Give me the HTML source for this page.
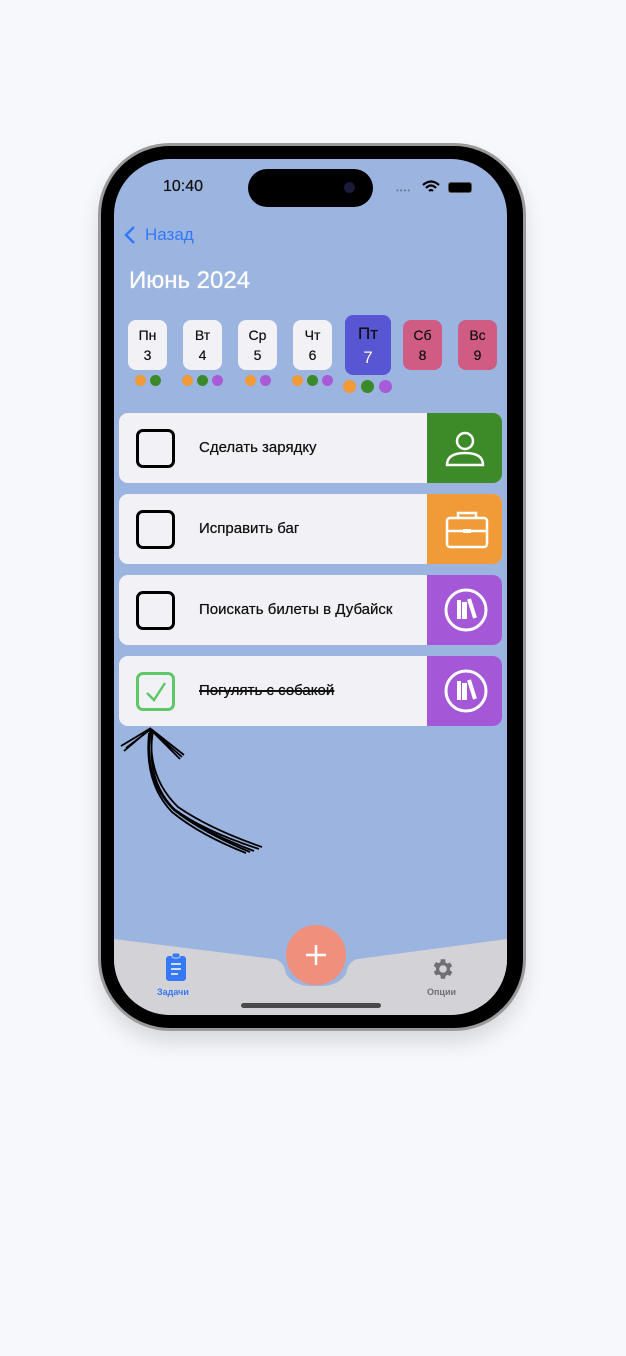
<!DOCTYPE html>
<html><head><meta charset="utf-8"><style>
*{margin:0;padding:0;box-sizing:border-box}
body{width:626px;height:1356px;background:#f7f8fc;position:relative;overflow:hidden;font-family:"Liberation Sans",sans-serif}
.a{position:absolute}
.frame{left:98px;top:143px;width:428px;height:888px;border-radius:72px;background:#000;border:3px solid #9a9a9c;box-shadow:0 12px 20px rgba(0,0,0,.12)}
.screen{left:114px;top:159px;width:393px;height:856px;border-radius:56px;background:#9bb4e0;overflow:hidden}
.day{width:39px;height:50px;border-radius:8px;background:#f2f2f6;text-align:center;font-size:14px;line-height:20px;padding-top:5px;color:#111;text-shadow:0 0 .4px #111}
.dot{width:11px;height:11px;border-radius:50%}
.row{left:5px;width:383px;height:70px;border-radius:9px;background:#f2f2f6;overflow:hidden}
.cb{left:17px;top:16px;width:39px;height:39px;border:3.5px solid #000;border-radius:7px}
.lbl{left:80px;top:26px;font-size:15px;color:#111;text-shadow:0 0 .5px #111}
.ic{right:0;top:0;width:75px;height:70px}
</style></head><body>
<div class="a frame"></div>
<div class="a screen">
 <div class="a" style="left:49px;top:19px;width:50px;font-size:16px;color:#111;text-shadow:0 0 .5px #111">10:40</div>
 <div class="a" style="left:134px;top:10px;width:125px;height:38px;border-radius:19px;background:#000"><div class="a" style="left:96px;top:13px;width:11px;height:11px;border-radius:50%;background:#1a1a3a"></div></div>
 <div class="a" style="left:282px;top:27px;font-size:8px;color:#6b7a98;letter-spacing:1px">••••</div>
 <svg class="a" style="left:308px;top:21px" width="18" height="14" viewBox="0 0 18 14"><path d="M1 5Q9-2 17 5M4 8Q9 3 14 8M7 11Q9 9 11 11" stroke="#000" stroke-width="2.2" fill="none"/></svg>
 <div class="a" style="left:334px;top:23px;width:24px;height:11px;border-radius:3px;background:#000;border:1px solid #555"></div>
 <svg class="a" style="left:9px;top:66px" width="14" height="20"><path d="M11 2L3 10L11 18" stroke="#3478f6" stroke-width="2.5" fill="none"/></svg>
 <div class="a" style="left:31px;top:66px;font-size:17px;color:#3478f6">Назад</div>
 <div class="a" style="left:15px;top:108px;font-size:24px;color:#fff;text-shadow:0 0 .8px #fff">Июнь 2024</div>

 <div class="a day" style="left:14px;top:161px">Пн<br>3</div>
 <div class="a day" style="left:69px;top:161px">Вт<br>4</div>
 <div class="a day" style="left:124px;top:161px">Ср<br>5</div>
 <div class="a day" style="left:179px;top:161px">Чт<br>6</div>
 <div class="a day" style="left:231px;top:156px;width:46px;height:60px;background:#5856d2;font-size:17px;line-height:24px;padding-top:7px"><span style="color:#111">Пт</span><br><span style="color:#fff">7</span></div>
 <div class="a day" style="left:289px;top:161px;background:#d05c84">Сб<br>8</div>
 <div class="a day" style="left:344px;top:161px;background:#d05c84">Вс<br>9</div>
 <div class="a dot" style="left:21px;top:216px;background:#f09a38"></div><div class="a dot" style="left:36px;top:216px;background:#3a8a2a"></div>
 <div class="a dot" style="left:68px;top:216px;background:#f09a38"></div><div class="a dot" style="left:83px;top:216px;background:#3a8a2a"></div><div class="a dot" style="left:98px;top:216px;background:#a95ad8"></div>
 <div class="a dot" style="left:131px;top:216px;background:#f09a38"></div><div class="a dot" style="left:146px;top:216px;background:#a95ad8"></div>
 <div class="a dot" style="left:178px;top:216px;background:#f09a38"></div><div class="a dot" style="left:193px;top:216px;background:#3a8a2a"></div><div class="a dot" style="left:208px;top:216px;background:#a95ad8"></div>
 <div class="a dot" style="left:229px;top:221px;width:13px;height:13px;background:#f09a38"></div><div class="a dot" style="left:247px;top:221px;width:13px;height:13px;background:#3a8a2a"></div><div class="a dot" style="left:265px;top:221px;width:13px;height:13px;background:#a95ad8"></div>

 <div class="a row" style="top:254px"><div class="a cb"></div><div class="a lbl">Сделать зарядку</div><div class="a ic" style="background:#3d8a28"><svg width="75" height="70"><circle cx="38" cy="28" r="8" stroke="#fff" stroke-width="2.5" fill="none"/><path d="M20 52Q20 40 38 40Q56 40 56 52Z" stroke="#fff" stroke-width="2.5" fill="none"/></svg></div></div>
 <div class="a row" style="top:335px"><div class="a cb"></div><div class="a lbl">Исправить баг</div><div class="a ic" style="background:#f09a38"><svg width="75" height="70"><rect x="20" y="24" width="40" height="29" rx="3" stroke="#fff" stroke-width="2.5" fill="none"/><path d="M31 24V19H49V24M20 37H60" stroke="#fff" stroke-width="2.5" fill="none"/><rect x="36" y="35" width="8" height="4" fill="#fff"/></svg></div></div>
 <div class="a row" style="top:416px"><div class="a cb"></div><div class="a lbl">Поискать билеты в Дубайск</div><div class="a ic" style="background:#a457d6"><svg width="75" height="70"><circle cx="39" cy="35" r="20" stroke="#fff" stroke-width="3" fill="none"/><rect x="30" y="25" width="4" height="19" fill="#fff"/><rect x="35" y="27" width="5" height="17" fill="#fff"/><path d="M42 24L48 43" stroke="#fff" stroke-width="4"/></svg></div></div>
 <div class="a row" style="top:497px"><div class="a cb" style="border-color:#5ec76a"><svg class="a" style="left:5px;top:5px" width="24" height="24"><path d="M3 13L10 20L21 3" stroke="#5ec76a" stroke-width="2.5" fill="none"/></svg></div><div class="a lbl" style="text-decoration:line-through;text-decoration-thickness:2px">Погулять с собакой</div><div class="a ic" style="background:#a457d6"><svg width="75" height="70"><circle cx="39" cy="35" r="20" stroke="#fff" stroke-width="3" fill="none"/><rect x="30" y="25" width="4" height="19" fill="#fff"/><rect x="35" y="27" width="5" height="17" fill="#fff"/><path d="M42 24L48 43" stroke="#fff" stroke-width="4"/></svg></div></div>

 <svg class="a" style="left:0;top:560px" width="160" height="140" fill="none" stroke="#000" stroke-width="1.8">
  <path d="M37 10Q28 60 60 90Q90 112 145 130"/><path d="M39 12Q31 62 62 92Q92 114 140 132"/><path d="M35 14Q30 64 58 93Q86 116 132 134"/><path d="M38 12Q33 58 64 88Q96 110 148 128"/><path d="M36 12Q30 62 60 91Q88 113 136 133"/>
  <path d="M37 9L7 27M36 10L10 32M37 10L70 36M38 12L66 40M37 10L12 29M37 11L68 38"/>
 </svg>

 <svg class="a" style="left:0;top:760px" width="393" height="96"><path d="M0 20L160 40Q170 42 172 55Q180 68 202 67Q224 68 232 55Q234 42 244 40L393 20V96H0Z" fill="#d3d2d7"/></svg>
 <div class="a" style="left:172px;top:766px;width:60px;height:60px;border-radius:50%;background:#ef8f7c"></div>
 <svg class="a" style="left:190px;top:784px" width="24" height="24"><path d="M12 2V22M2 12H22" stroke="#fff" stroke-width="2.5"/></svg>
 <svg class="a" style="left:50px;top:793px" width="24" height="30"><rect x="2" y="4" width="20" height="25" rx="3" fill="#3478f6"/><rect x="8" y="1" width="8" height="5" rx="2" fill="#3478f6" stroke="#d3d2d7"/><path d="M7 12H17M7 17H17M7 22H14" stroke="#fff" stroke-width="1.5"/></svg>
 <div class="a" style="left:43px;top:828px;font-size:9px;font-weight:bold;color:#3478f6">Задачи</div>
 <svg class="a" style="left:316px;top:797px" width="26" height="26" viewBox="0 0 24 24"><path fill="#707074" d="M19.4 13a7.5 7.5 0 0 0 0-2l2.1-1.6-2-3.4-2.5 1a7 7 0 0 0-1.7-1L15 3h-4l-.4 2.6a7 7 0 0 0-1.7 1l-2.5-1-2 3.4L6.6 11a7.5 7.5 0 0 0 0 2l-2.1 1.6 2 3.4 2.5-1a7 7 0 0 0 1.7 1L11 21h4l.4-2.6a7 7 0 0 0 1.7-1l2.5 1 2-3.4zM13 15.5a3.5 3.5 0 1 1 0-7 3.5 3.5 0 0 1 0 7z" transform="translate(-1 0)"/></svg>
 <div class="a" style="left:313px;top:828px;font-size:9px;font-weight:bold;color:#707074">Опции</div>
 <div class="a" style="left:127px;top:844px;width:140px;height:5px;border-radius:3px;background:#4a4a4c"></div>
</div>
</body></html>
